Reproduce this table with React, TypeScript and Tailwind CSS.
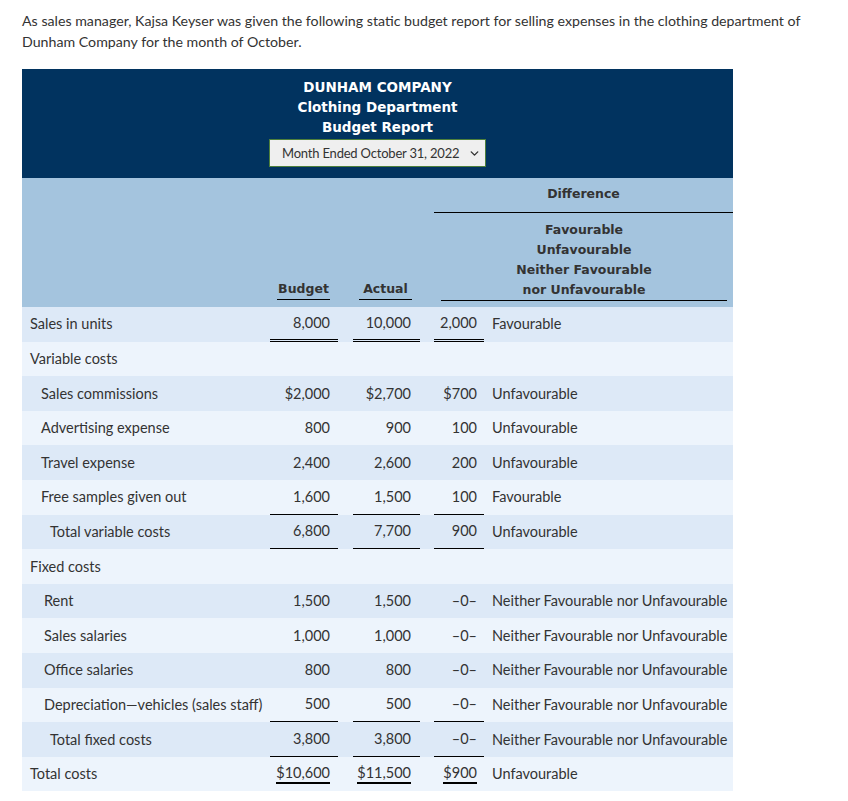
import React from "react";
import { ChevronDown } from "lucide-react";

// 予算報告書の行データ
type Line = "none" | "single" | "double" | "total";

interface Row {
  label: string;
  indent: string;
  budget?: string;
  actual?: string;
  diff?: string;
  desc?: string;
  line?: Line;
}

const NIL = "\u20130\u2013";
const NEITHER = "Neither Favourable nor Unfavourable";

const rows: Row[] = [
  { label: "Sales in units", indent: "pl-[8px]", budget: "8,000", actual: "10,000", diff: "2,000", desc: "Favourable", line: "double" },
  { label: "Variable costs", indent: "pl-[8px]" },
  { label: "Sales commissions", indent: "pl-[19px]", budget: "$2,000", actual: "$2,700", diff: "$700", desc: "Unfavourable" },
  { label: "Advertising expense", indent: "pl-[19px]", budget: "800", actual: "900", diff: "100", desc: "Unfavourable" },
  { label: "Travel expense", indent: "pl-[19px]", budget: "2,400", actual: "2,600", diff: "200", desc: "Unfavourable" },
  { label: "Free samples given out", indent: "pl-[19px]", budget: "1,600", actual: "1,500", diff: "100", desc: "Favourable", line: "single" },
  { label: "Total variable costs", indent: "pl-[28px]", budget: "6,800", actual: "7,700", diff: "900", desc: "Unfavourable", line: "single" },
  { label: "Fixed costs", indent: "pl-[8px]" },
  { label: "Rent", indent: "pl-[22px]", budget: "1,500", actual: "1,500", diff: NIL, desc: NEITHER },
  { label: "Sales salaries", indent: "pl-[22px]", budget: "1,000", actual: "1,000", diff: NIL, desc: NEITHER },
  { label: "Office salaries", indent: "pl-[22px]", budget: "800", actual: "800", diff: NIL, desc: NEITHER },
  { label: "Depreciation\u2014vehicles (sales staff)", indent: "pl-[22px]", budget: "500", actual: "500", diff: NIL, desc: NEITHER, line: "single" },
  { label: "Total fixed costs", indent: "pl-[28px]", budget: "3,800", actual: "3,800", diff: NIL, desc: NEITHER, line: "single" },
  { label: "Total costs", indent: "pl-[8px]", budget: "$10,600", actual: "$11,500", diff: "$900", desc: "Unfavourable", line: "total" },
];

const GRID = "grid grid-cols-[248px_83px_81px_58px_1fr]";

function Amount({ value, width, pr, line }: { value?: string; width: string; pr: string; line: Line }) {
  const border =
    line === "double"
      ? "border-b-[3px] border-double border-black"
      : line === "single"
        ? "border-b border-black"
        : "";
  return (
    <div className="h-full">
      <div className={`${width} ${pr} ${border} flex h-full items-center justify-end whitespace-nowrap`}>
        {line === "total" ? (
          <span className="border-b-2 border-black leading-[18px]">{value}</span>
        ) : (
          value
        )}
      </div>
    </div>
  );
}

export default function App() {
  return (
    <div className="min-h-[801px] bg-white px-[22px] pt-[10px] font-['Lato','Liberation_Sans',sans-serif] text-[14.2px] text-[#333]">
      <p className="leading-[21px]">
        As sales manager, Kajsa Keyser was given the following static budget report for selling expenses in the clothing
        department of Dunham Company for the month of October.
      </p>

      <div className="mt-[17px] w-[711px] text-[14.5px]">
        {/* 見出し（濃紺） */}
        <div className="flex h-[109px] flex-col items-center bg-[#01335f] pt-[8px] font-['DejaVu_Sans',Verdana,sans-serif] text-[13.5px] font-bold leading-[20px] text-white">
          <div>DUNHAM COMPANY</div>
          <div>Clothing Department</div>
          <div>Budget Report</div>
          <div className="mt-[2px] flex h-[28px] w-[217px] items-center justify-between border border-[#4d7f3b] bg-[#efefef] pl-[12px] pr-[4px] font-['Lato',sans-serif] text-[13px] font-normal text-[#333]">
            <span className="whitespace-nowrap tracking-[-0.2px]">Month Ended October 31, 2022</span>
            <ChevronDown className="h-[13px] w-[13px] shrink-0" strokeWidth={2.6} />
          </div>
        </div>

        {/* 列見出し */}
        <div
          className={`${GRID} h-[129px] bg-[#a4c4de] font-['DejaVu_Sans',Verdana,sans-serif] text-[12.5px] font-bold leading-[20px] text-[#333]`}
        >
          <div />
          <div className="flex items-end pb-[7px] pl-[7px]">
            <div className="w-[53px] border-b border-black text-center">Budget</div>
          </div>
          <div className="flex items-end pb-[7px] pl-[6px]">
            <div className="w-[53px] border-b border-black text-center">Actual</div>
          </div>
          <div className="col-span-2 flex flex-col pt-[6px]">
            <div className="text-center">Difference</div>
            <div className="mt-[8px] border-b border-black" />
            <div className="mx-[6px] mt-[7px] ml-[7px] border-b border-black text-center">
              <div>Favourable</div>
              <div>Unfavourable</div>
              <div>Neither Favourable</div>
              <div>nor Unfavourable</div>
            </div>
          </div>
        </div>

        {/* 明細行 */}
        {rows.map((r, i) => {
          const line = r.line ?? "none";
          return (
            <div
              key={r.label}
              className={`${GRID} h-[34.6px] ${i % 2 === 0 ? "bg-[#dde9f7]" : "bg-[#edf4fc]"}`}
            >
              <div className={`flex items-center whitespace-nowrap ${r.indent}`}>{r.label}</div>
              <Amount value={r.budget} width="w-[68px]" pr="pr-[8px]" line={line} />
              <Amount value={r.actual} width="w-[67px]" pr="pr-[9px]" line={line} />
              <Amount value={r.diff} width="w-[50px]" pr="pr-[7px]" line={line} />
              <div className="flex items-center whitespace-nowrap">{r.desc}</div>
            </div>
          );
        })}
      </div>
    </div>
  );
}
